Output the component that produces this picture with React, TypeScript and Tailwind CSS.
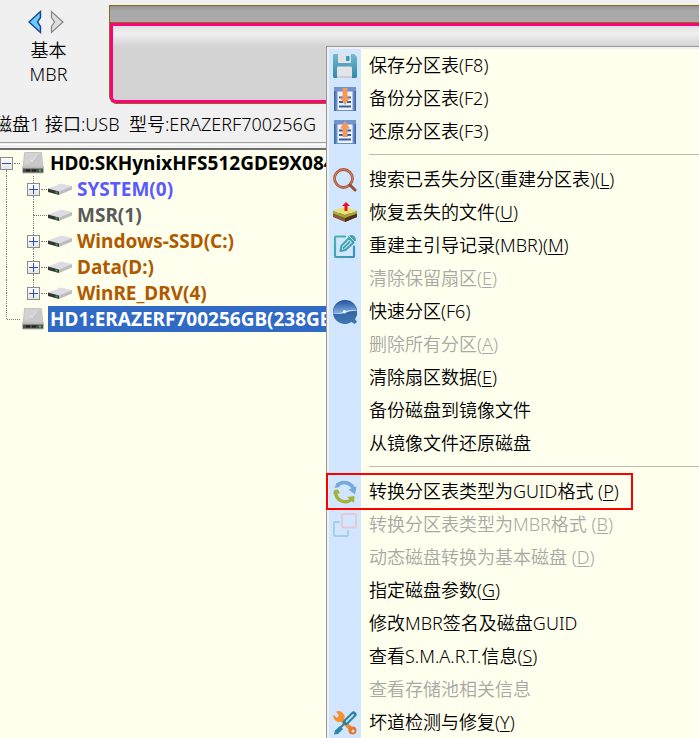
import type { ReactNode } from "react";
import clsx from "clsx";

type MenuEntry =
  | { kind: "separator" }
  | {
      kind: "item";
      label: string;
      hotkey?: string;
      icon?: ReactNode;
      disabled?: boolean;
      marked?: boolean;
    };

type TreeNode = {
  label: string;
  color: string;
  expandable: boolean;
};

function SaveIcon() {
  return (
    <svg width="24" height="24" viewBox="0 0 24 24" aria-hidden="true">
      <defs>
        <linearGradient id="save-body" x1="0" y1="0" x2="0" y2="1">
          <stop offset="0" stopColor="#74b8d0" />
          <stop offset="1" stopColor="#3389a8" />
        </linearGradient>
      </defs>
      <path d="M1 0h20l3 3v20l-1 1H1l-1-1V1z" fill="url(#save-body)" />
      <path d="M5 0h13v8q0 1-1 1H6q-1 0-1-1z" fill="#dfe3e6" />
      <rect x="13" y="2" width="3.500" height="5" rx="0.500" fill="#3f97b8" />
      <rect x="4" y="12.500" width="15" height="11.500" rx="1" fill="#e2e4e7" />
      <rect x="4" y="22" width="15" height="2" fill="#c9ced2" />
    </svg>
  );
}

function TableIcon({ up = false }: { up?: boolean }) {
  return (
    <svg width="24" height="24" viewBox="0 0 24 24" aria-hidden="true">
      <path d="M1 0h22v24H1z" fill="#6a8fc9" />
      <path d="M1 0h22v4H1z" fill="#6f94cf" />
      <path d="M1 4h1.500v20H1zM21.500 4H23v20h-1.500z" fill="#3f66a8" />
      <path d="M4.500 4.500h15V23h-15z" fill="#eef2f8" />
      <path d="M6 10.500h4M14 10.500h4M6 15h4M14 15h4M6 19.500h12" stroke="#345fa8" strokeWidth="2" />
      {up ? (
        <path d="M12 1l5 7.500h-2.500V17h-5V8.500H7z" fill="#f39a5a" />
      ) : (
        <path d="M9.500 1h5v9.500H17L12 18l-5-7.500h2.500z" fill="#f39a5a" />
      )}
    </svg>
  );
}

function SearchIcon() {
  return (
    <svg width="24" height="24" viewBox="0 0 24 24" fill="none" aria-hidden="true">
      <circle cx="10.500" cy="10.500" r="9" stroke="#a95332" strokeWidth="2.800" />
      <circle cx="10.500" cy="10.500" r="9" stroke="#cf8160" strokeWidth="1.200" />
      <path d="M17 17l5 5" stroke="#9a4c34" strokeWidth="3" strokeLinecap="round" />
    </svg>
  );
}

function RecoverIcon() {
  return (
    <svg width="24" height="24" viewBox="0 0 24 24" aria-hidden="true">
      <path d="M0 12v4l12 5 12-5v-4z" fill="#8a5a30" />
      <path d="M12 16l12-4.500V16l-12 5z" fill="#51301a" />
      <path d="M0 9.500l12 5 12-5v3l-12 4.500-12-4.500z" fill="#a9a63a" />
      <path d="M0 9.500l12-3.500 12 3.500-12 4.500z" fill="#e6e273" />
      <path d="M13 1l4 4h-2.500v5h-3V5H9z" fill="#e8141c" />
    </svg>
  );
}

function RebuildIcon() {
  return (
    <svg width="24" height="24" viewBox="0 0 24 24" fill="none" aria-hidden="true">
      <defs>
        <linearGradient id="rebuild" x1="0" y1="0" x2="1" y2="1">
          <stop offset="0" stopColor="#48b7a5" />
          <stop offset="1" stopColor="#3b8fbd" />
        </linearGradient>
      </defs>
      <path
        d="M12 2.500H3q-1 0-1 1V22q0 1 1 1h17q1 0 1-1v-9.500"
        stroke="url(#rebuild)"
        strokeWidth="2.200"
        strokeLinecap="round"
      />
      <path
        d="M7.500 17l.8-5L16 4l4.500 4.500-8 7.500z"
        stroke="url(#rebuild)"
        strokeWidth="2"
        strokeLinejoin="round"
      />
      <path d="M10 14.500l7-7" stroke="#43a5af" strokeWidth="1.800" />
      <path d="M15 2.500Q17 .5 19 1q4 1 4 5.500l-2 2z" fill="#43a3a9" />
      <path d="M16 2l6 6" stroke="#d2e7ff" strokeWidth="0.800" />
    </svg>
  );
}

function QuickIcon() {
  return (
    <svg width="24" height="24" viewBox="0 0 24 24" aria-hidden="true">
      <defs>
        <linearGradient id="quick-top" x1="0" y1="0" x2="0" y2="1">
          <stop offset="0" stopColor="#2558a8" />
          <stop offset="1" stopColor="#8ab4e4" />
        </linearGradient>
        <linearGradient id="quick-bottom" x1="0" y1="0" x2="0" y2="1">
          <stop offset="0" stopColor="#2a5592" />
          <stop offset="1" stopColor="#3f77b5" />
        </linearGradient>
      </defs>
      <path d="M12 0a12 12 0 0 1 10 19l2 3-2.500 2-3-2A12 12 0 1 1 12 0z" fill="url(#quick-bottom)" />
      <path d="M.2 13A12 12 0 0 1 23.800 10q-6-1-10.800 2-7 2.500-12.800 1z" fill="url(#quick-top)" />
      <path d="M0 13.500q7 .3 11.500-2Q17 9 23.800 10v.8q-6-.3-10.800 1.700-6 2-12.900 1.500z" fill="#c8dff5" />
      <circle cx="11.500" cy="11.800" r="1.800" fill="#eaf4fd" />
    </svg>
  );
}

function ConvertIcon() {
  return (
    <svg width="24" height="24" viewBox="0 0 24 24" fill="none" aria-hidden="true">
      <path d="M4 5.500A10 10 0 0 1 21 11" stroke="#75a9d8" strokeWidth="3.500" />
      <path d="M15.500 9.500l6.500 5 1.500-8z" fill="#75a9d8" />
      <path d="M2.500 12A9.800 9.800 0 0 0 18.500 19.500" stroke="#a5b13a" strokeWidth="3.500" />
      <path d="M14 17l7.500-1-.5 7z" fill="#a5b13a" />
      <path d="M0 13.500l1.500-3.500 3.500-.5 2 4z" fill="#a5b13a" />
      <path d="M1.500 8l2-5 3.500 4z" fill="#75a9d8" />
    </svg>
  );
}

function CopyIcon() {
  return (
    <svg width="24" height="24" viewBox="0 0 24 24" fill="none" aria-hidden="true">
      <path
        d="M6 9H2q-1 0-1 1v12q0 1 1 1h12q1 0 1-1v-4"
        stroke="#a5cdec"
        strokeWidth="2"
        strokeLinecap="round"
      />
      <rect x="9" y="1" width="14" height="13.500" rx="1" stroke="#e3cbd3" strokeWidth="2" />
    </svg>
  );
}

function RepairIcon() {
  return (
    <svg width="24" height="24" viewBox="0 0 24 24" fill="none" aria-hidden="true">
      <path d="M7 7l12 12" stroke="#f08a2a" strokeWidth="4" />
      <path d="M3 .8a6 6 0 0 1 8 8 6 6 0 0 1-10.500-5l3.500 3 2-2.300z" fill="#f5922f" />
      <circle cx="19.500" cy="19.500" r="4" fill="#e87628" />
      <circle cx="20" cy="20" r="1.500" fill="#d2e7ff" />
      <path d="M13 11l7.500-7.500" stroke="#2b7ea5" strokeWidth="6" strokeLinecap="round" />
      <path d="M13.500 10.500L20 4" stroke="#bfe3ee" strokeWidth="1.800" strokeLinecap="round" />
      <path d="M12.500 11.500L5 19" stroke="#2e86ab" strokeWidth="2.200" />
      <path d="M7 15l3 3-5 5-4 .5 1-4z" fill="#2e86ab" />
    </svg>
  );
}

function DriveIcon() {
  return (
    <svg width="22" height="22" viewBox="0 0 22 22" className="shrink-0" aria-hidden="true">
      <path d="M2 1q0-1 1-1h16q1 0 1 1l1.500 15H.5z" fill="#c4c4c4" />
      <path d="M3 1h16l1 13H2z" fill="#d2d2d2" />
      <path d="M3 12q5 0 7-3.500T16 3l3-1 1 12H2z" fill="#c8c8c8" />
      <path d="M10 9l4.500-5.500" stroke="#e6e6e6" />
      <path d="M8.500 8l2 1.500" stroke="#efefef" />
      <path d="M0 14.500h22v6q0 1-1 1H1q-1 0-1-1z" fill="#bcbcbc" />
      <rect x="1" y="16.500" width="20" height="4" fill="#4e4e4e" />
      <path d="M4 18.500h4M10 18.500h4" stroke="#1f1f1f" strokeWidth="2" />
      <rect x="17" y="17.500" width="2" height="2" fill="#3fc63f" />
    </svg>
  );
}

function PartitionIcon() {
  return (
    <svg width="24" height="13" viewBox="0 0 24 13" className="shrink-0" aria-hidden="true">
      <path d="M0 5.500L13 .5 24 3 11 8.500z" fill="#dcdce2" />
      <path d="M11 8.500L24 3v3.500L11 12z" fill="#bcbcc2" />
      <path d="M0 5.500l11 3V12L0 9z" fill="#333336" />
      <rect x="7.500" y="8.500" width="2" height="2" fill="#2fb53a" />
    </svg>
  );
}

const partitions: TreeNode[] = [
  { label: "SYSTEM(0)", color: "text-[#5a5aff]", expandable: true },
  { label: "MSR(1)", color: "text-[#5a5a5a]", expandable: false },
  { label: "Windows-SSD(C:)", color: "text-[#b05a00]", expandable: true },
  { label: "Data(D:)", color: "text-[#b05a00]", expandable: true },
  { label: "WinRE_DRV(4)", color: "text-[#b05a00]", expandable: true },
];

const menu: MenuEntry[] = [
  { kind: "item", label: "保存分区表(F8)", icon: <SaveIcon /> },
  { kind: "item", label: "备份分区表(F2)", icon: <TableIcon /> },
  { kind: "item", label: "还原分区表(F3)", icon: <TableIcon up /> },
  { kind: "separator" },
  { kind: "item", label: "搜索已丢失分区(重建分区表)", hotkey: "L", icon: <SearchIcon /> },
  { kind: "item", label: "恢复丢失的文件", hotkey: "U", icon: <RecoverIcon /> },
  { kind: "item", label: "重建主引导记录(MBR)", hotkey: "M", icon: <RebuildIcon /> },
  { kind: "item", label: "清除保留扇区", hotkey: "E", disabled: true },
  { kind: "item", label: "快速分区(F6)", icon: <QuickIcon /> },
  { kind: "item", label: "删除所有分区", hotkey: "A", disabled: true },
  { kind: "item", label: "清除扇区数据", hotkey: "E" },
  { kind: "item", label: "备份磁盘到镜像文件" },
  { kind: "item", label: "从镜像文件还原磁盘" },
  { kind: "separator" },
  { kind: "item", label: "转换分区表类型为GUID格式 ", hotkey: "P", icon: <ConvertIcon />, marked: true },
  { kind: "item", label: "转换分区表类型为MBR格式 ", hotkey: "B", icon: <CopyIcon />, disabled: true },
  { kind: "item", label: "动态磁盘转换为基本磁盘 ", hotkey: "D", disabled: true },
  { kind: "item", label: "指定磁盘参数", hotkey: "G" },
  { kind: "item", label: "修改MBR签名及磁盘GUID" },
  { kind: "item", label: "查看S.M.A.R.T.信息", hotkey: "S" },
  { kind: "item", label: "查看存储池相关信息", disabled: true },
  { kind: "item", label: "坏道检测与修复", hotkey: "Y", icon: <RepairIcon /> },
];

function Expander({ open = false, label }: { open?: boolean; label: string }) {
  return (
    <button
      aria-label={label}
      aria-expanded={open}
      className="flex size-[13px] shrink-0 items-center justify-center border border-[#8c8c8c] bg-linear-to-b from-white to-[#e4e4e4]"
    >
      <svg width="9" height="9" viewBox="0 0 9 9" aria-hidden="true">
        <path d={open ? "M0 4.500h9" : "M0 4.500h9M4.500 0v9"} stroke="#2f4fb0" />
      </svg>
    </button>
  );
}

// One column of the tree's guide lines, with an optional +/- box in the middle
function Guide({ top = false, bottom = false, children }: { top?: boolean; bottom?: boolean; children?: ReactNode }) {
  return (
    <span className="flex w-[13px] shrink-0 flex-col items-center self-stretch">
      <span className={clsx("w-px flex-1", top && "border-l border-dotted border-[#777777]")} />
      {children}
      <span className={clsx("w-px flex-1", bottom && "border-l border-dotted border-[#777777]")} />
    </span>
  );
}

function DiskTree() {
  return (
    <ul className="text-[19px] font-bold leading-[26px]">
      <li>
        <div className="flex h-[26px] items-center">
          <Guide bottom>
            <Expander open label="HD0" />
          </Guide>
          <span className="ml-px mr-0.5 w-1.5 border-t border-dotted border-[#777777]" />
          <DriveIcon />
          <span className="ml-1 px-0.5 whitespace-nowrap">HD0:SKHynixHFS512GDE9X084</span>
        </div>
        <ul>
          {partitions.map((p, i) => (
            <li key={p.label} className="flex h-[26px] items-center">
              <Guide top bottom />
              <span className="w-3.5 shrink-0" />
              <Guide top bottom={i < partitions.length - 1}>
                {p.expandable && <Expander label={p.label} />}
              </Guide>
              <span
                className={clsx(
                  "mr-px border-t border-dotted border-[#777777]",
                  p.expandable ? "ml-px w-1.5" : "-ml-1.5 w-[13px]"
                )}
              />
              <PartitionIcon />
              <span className={clsx("ml-[5px] whitespace-nowrap", p.color)}>{p.label}</span>
            </li>
          ))}
        </ul>
      </li>
      <li className="flex h-[26px] items-center">
        <Guide top />
        <span className="-ml-1.5 mr-0.5 w-[13px] border-t border-dotted border-[#777777]" />
        <DriveIcon />
        <span className="ml-1 bg-[#316ac5] px-0.5 whitespace-nowrap text-white">
          HD1:ERAZERF700256GB(238GB)
        </span>
      </li>
    </ul>
  );
}

function ContextMenu() {
  return (
    <ul
      role="menu"
      className="absolute top-[46px] right-0 left-[326px] border-t border-l border-[#999999] bg-[#f0f0f0] pt-0.5 pl-0.5"
    >
      {menu.map((entry, i) =>
        entry.kind === "separator" ? (
          <li key={i} role="separator" className="flex h-[15px] bg-[#ffffee]">
            <span className="w-8 bg-[#d2e7ff]" />
            <span className="mt-1.5 ml-2 h-px flex-1 bg-[#bcbcb0]" />
          </li>
        ) : (
          <li key={i} role="none" className={clsx("relative bg-[#ffffee]", entry.marked && "z-10")}>
            <button
              role="menuitem"
              disabled={entry.disabled}
              className="flex h-[33px] w-full items-center text-left whitespace-pre disabled:text-[#a8a8a4]"
            >
              <span className="flex w-8 shrink-0 items-center justify-center self-stretch bg-[#d2e7ff]">
                {entry.icon}
              </span>
              <span className="ml-2">
                {entry.label}
                {entry.hotkey && (
                  <>
                    (<u className="underline-offset-2">{entry.hotkey}</u>)
                  </>
                )}
              </span>
            </button>
            {entry.marked && (
              <span className="pointer-events-none absolute -inset-y-0.5 -left-[3px] w-[307px] border-2 border-[#ff0000]" />
            )}
          </li>
        )
      )}
    </ul>
  );
}

export default function App() {
  return (
    <div className="relative h-screen overflow-hidden bg-[#ffffee] font-['Noto_Sans','Noto_Sans_CJK_SC',sans-serif] text-[18px] font-[350] text-black">
      <header className="border-b-2 border-[#6e6e6e] bg-[#f0f0f0]">
        <div className="flex pt-[5px]">
          <div className="flex w-[109px] shrink-0 flex-col items-center pr-3 pt-[5px] leading-6">
            <div className="flex gap-2 pr-1.5">
              <button aria-label="上一个磁盘">
                <svg width="14" height="24" viewBox="0 0 14 24">
                  <path d="M12.500 1.500v6L9.500 12l3 4.500v6L1 12z" fill="#6ccbfb" stroke="#17468c" strokeWidth="1.400" />
                </svg>
              </button>
              <button aria-label="下一个磁盘">
                <svg width="14" height="24" viewBox="0 0 14 24">
                  <path d="M1.500 1.500v6L4.500 12l-3 4.500v6L13 12z" fill="#dedede" stroke="#858585" strokeWidth="1.200" />
                </svg>
              </button>
            </div>
            <div className="mt-1">基本</div>
            <div>MBR</div>
          </div>
          <div className="h-[99px] flex-1 rounded-bl-lg border-t border-l border-b border-[#8a6d12] bg-[#8a6d12]">
            <div className="h-4 bg-linear-to-b from-[#929292] via-[#a8a8a8] via-30% to-[#aaaaaa]" />
            <div className="mt-px h-20 rounded-bl-md border-y-3 border-l-3 border-[#ff0080] bg-linear-to-b from-[#e0e0e0] via-[#f0f0f0] via-10% to-[#d3d3d3] to-28%" />
          </div>
        </div>
        <p className="h-[39px] border-b border-[#a0a0a0] leading-10 whitespace-pre">
          <span className="-ml-1.5">磁盘1 接口:USB  型号:ERAZERF700256G</span>
        </p>
        <div className="mt-px h-1 border-t border-white" />
      </header>
      <DiskTree />
      <ContextMenu />
    </div>
  );
}
